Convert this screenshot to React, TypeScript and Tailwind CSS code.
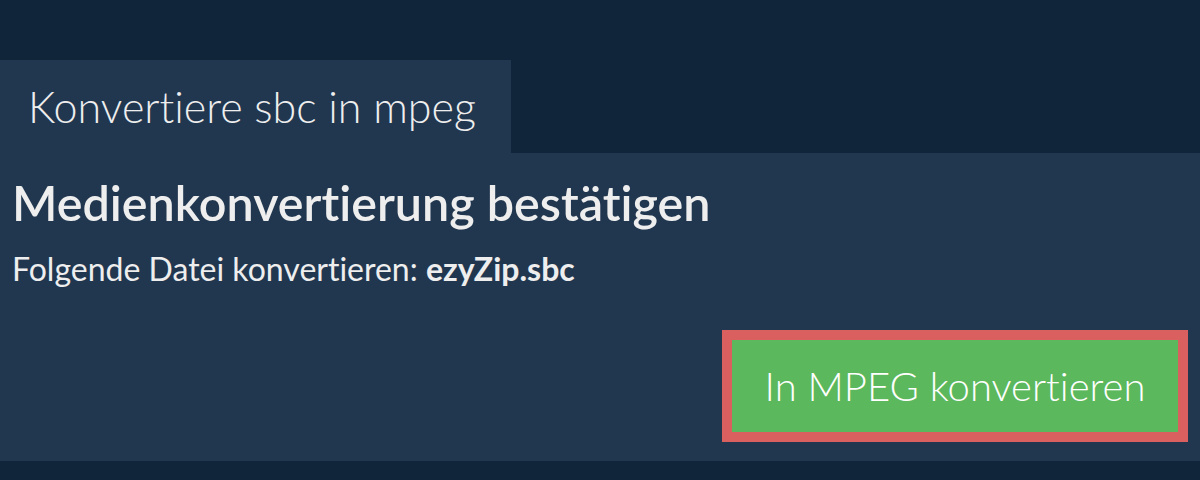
export default function App() {
  return (
    <div className="h-[480px] w-[1200px] bg-[#10243a] pt-[60px] font-['Lato','Noto_Sans',sans-serif] text-[#eeeeee] [font-variant-ligatures:none]">
      <div className="flex h-[93px] w-[511px] items-center bg-[#213750] pl-[28px]">
        <h2 className="text-[43px] font-light leading-none">Konvertiere sbc in mpeg</h2>
      </div>
      <div className="flex h-[308px] flex-col bg-[#213750] px-[12px] pt-[25px]">
        <h1 className="text-[48.5px] font-semibold leading-none">Medienkonvertierung bestätigen</h1>
        <p className="mt-[26px] text-[32px] font-normal leading-none">
          Folgende Datei konvertieren: <b className="font-bold">ezyZip.sbc</b>
        </p>
        <div className="mt-[45px] flex justify-end">
          <button className="h-[112px] w-[466px] border-[10px] border-[#d9605e] bg-[#5cb85c] text-[40px] font-light text-white">
            In MPEG konvertieren
          </button>
        </div>
      </div>
    </div>
  );
}
